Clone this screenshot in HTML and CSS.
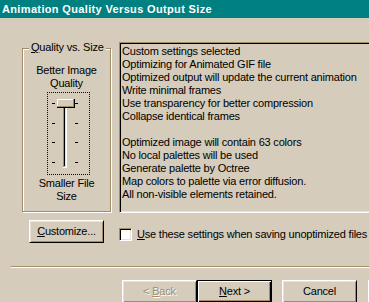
FILE: index.html
```html
<!DOCTYPE html>
<html lang="en">
<head>
  <meta charset="UTF-8">
  <title>Animation Quality Versus Output Size</title>
  <link rel="stylesheet" href="styles.css">
</head>
<body>
  <div class="header">Animation Quality Versus Output Size</div>

  <div class="main">
    <div class="group">
      <span class="legend"><u>Q</u>uality vs. Size</span>
      <div class="caption">Better Image<br>Quality</div>
      <div class="slider">
        <svg width="41" height="81" viewBox="0 0 41 81" shape-rendering="crispEdges">
          <!-- ticks -->
          <rect x="4" y="10" width="3" height="1" fill="#000"/>
          <rect x="27" y="10" width="3" height="1" fill="#000"/>
          <rect x="4" y="30" width="3" height="1" fill="#000"/>
          <rect x="27" y="30" width="3" height="1" fill="#000"/>
          <rect x="4" y="49" width="3" height="1" fill="#000"/>
          <rect x="27" y="49" width="3" height="1" fill="#000"/>
          <rect x="4" y="69" width="3" height="1" fill="#000"/>
          <rect x="27" y="69" width="3" height="1" fill="#000"/>
          <!-- track -->
          <rect x="15" y="8" width="1" height="66" fill="#a28d68"/>
          <rect x="16" y="8" width="1" height="65" fill="#000"/>
          <rect x="17" y="8" width="1" height="65" fill="#e6e0d6"/>
          <rect x="18" y="8" width="1" height="66" fill="#fff"/>
          <rect x="15" y="74" width="4" height="1" fill="#fff"/>
          <!-- thumb -->
          <rect x="9" y="6" width="18" height="9" fill="#000"/>
          <rect x="9" y="6" width="17" height="8" fill="#a28d68"/>
          <rect x="9" y="6" width="16" height="7" fill="#fff"/>
          <rect x="10" y="7" width="15" height="6" fill="#d5ccbb"/>
        </svg>
      </div>
      <div class="caption caption-low">Smaller File<br>Size</div>
    </div>

    <div class="report">
      <div>Custom settings selected</div>
      <div>Optimizing for Animated GIF file</div>
      <div>Optimized output will update the current animation</div>
      <div>Write minimal frames</div>
      <div>Use transparency for better compression</div>
      <div>Collapse identical frames</div>
      <div class="blank"></div>
      <div>Optimized image will contain 63 colors</div>
      <div>No local palettes will be used</div>
      <div>Generate palette by Octree</div>
      <div>Map colors to palette via error diffusion.</div>
      <div>All non-visible elements retained.</div>
    </div>
  </div>

  <div class="options">
    <button class="btn"><u>C</u>ustomize...</button>
    <label class="check">
      <span class="box"></span>
      <span><u>U</u>se these settings when saving unoptimized files</span>
    </label>
  </div>

  <div class="separator"></div>

  <div class="nav">
    <button class="btn" disabled>&lt; <u>B</u>ack</button>
    <button class="btn default"><u>N</u>ext &gt;</button>
    <button class="btn cancel">Cancel</button>
    <button class="btn help"></button>
  </div>
</body>
</html>
```

FILE: styles.css
```css
* {
  box-sizing: border-box;
}
body {
  margin: 0;
  width: 369px;
  height: 302px;
  overflow: hidden;
  background: #d5ccbb;
  color: #000;
  font-family: 'Liberation Sans', Arial, sans-serif;
  font-size: 11px;
  line-height: 13px;
  letter-spacing: -0.2px;
}
u {
  text-decoration: underline;
}
.header {
  height: 18px;
  line-height: 18px;
  padding-left: 2px;
  background: #008080;
  color: #fff;
  font-weight: bold;
  letter-spacing: 0.35px;
  white-space: nowrap;
}
.main {
  display: flex;
  align-items: flex-start;
  height: 195px;
  padding: 24px 0 0 22px;
}
.group {
  position: relative;
  flex: none;
  width: 89px;
  height: 164px;
  margin-top: 6px;
  padding-top: 15px;
  border: 1px solid #a28d68;
  box-shadow: inset 1px 1px 0 #fff, 1px 1px 0 #fff;
}
.legend {
  position: absolute;
  top: -8px;
  left: 6px;
  padding: 0 2px;
  background: #d5ccbb;
  white-space: nowrap;
}
.caption {
  text-align: center;
  white-space: nowrap;
}
.caption-low {
  margin-top: 2px;
}
.slider {
  width: 43px;
  height: 83px;
  margin: 2px 0 0 24px;
  border: 1px dotted #000080;
}
.slider svg {
  display: block;
}
.report {
  flex: none;
  width: 270px;
  height: 171px;
  margin-left: 8px;
  padding: 2px 0 0 2px;
  border: 1px solid;
  border-color: #a28d68 #fff #fff #a28d68;
  box-shadow: inset 1px 1px 0 #000, inset -1px -1px 0 #e6e0d6;
  white-space: nowrap;
}
.blank {
  height: 13px;
}
.options {
  display: flex;
  align-items: flex-start;
  padding: 7px 0 0 29px;
}
.btn {
  flex: none;
  width: 75px;
  height: 23px;
  padding: 0;
  font: inherit;
  letter-spacing: inherit;
  color: #000;
  background: #d5ccbb;
  border: 1px solid;
  border-color: #fff #000 #000 #fff;
  box-shadow: inset 1px 1px 0 #e6e0d6, inset -1px -1px 0 #a28d68;
  border-radius: 0;
}
.btn:disabled {
  color: #a28d68;
  text-shadow: 1px 1px 0 #fff;
}
.btn.default {
  border-color: #000;
  box-shadow: inset 1px 1px 0 #fff, inset -1px -1px 0 #000, inset -2px -2px 0 #a28d68;
}
.check {
  display: flex;
  align-items: center;
  margin: 8px 0 0 15px;
  white-space: nowrap;
}
.box {
  flex: none;
  width: 13px;
  height: 13px;
  margin-right: 5px;
  background: #fff;
  border: 1px solid;
  border-color: #a28d68 #fff #fff #a28d68;
  box-shadow: inset 1px 1px 0 #000, inset -1px -1px 0 #e6e0d6;
}
.separator {
  height: 2px;
  margin: 23px 0 0 11px;
  border-top: 1px solid #a28d68;
  border-bottom: 1px solid #fff;
}
.nav {
  display: flex;
  padding: 12px 0 0 122px;
}
.cancel {
  margin-left: 10px;
}
.help {
  margin-left: 11px;
}
```
